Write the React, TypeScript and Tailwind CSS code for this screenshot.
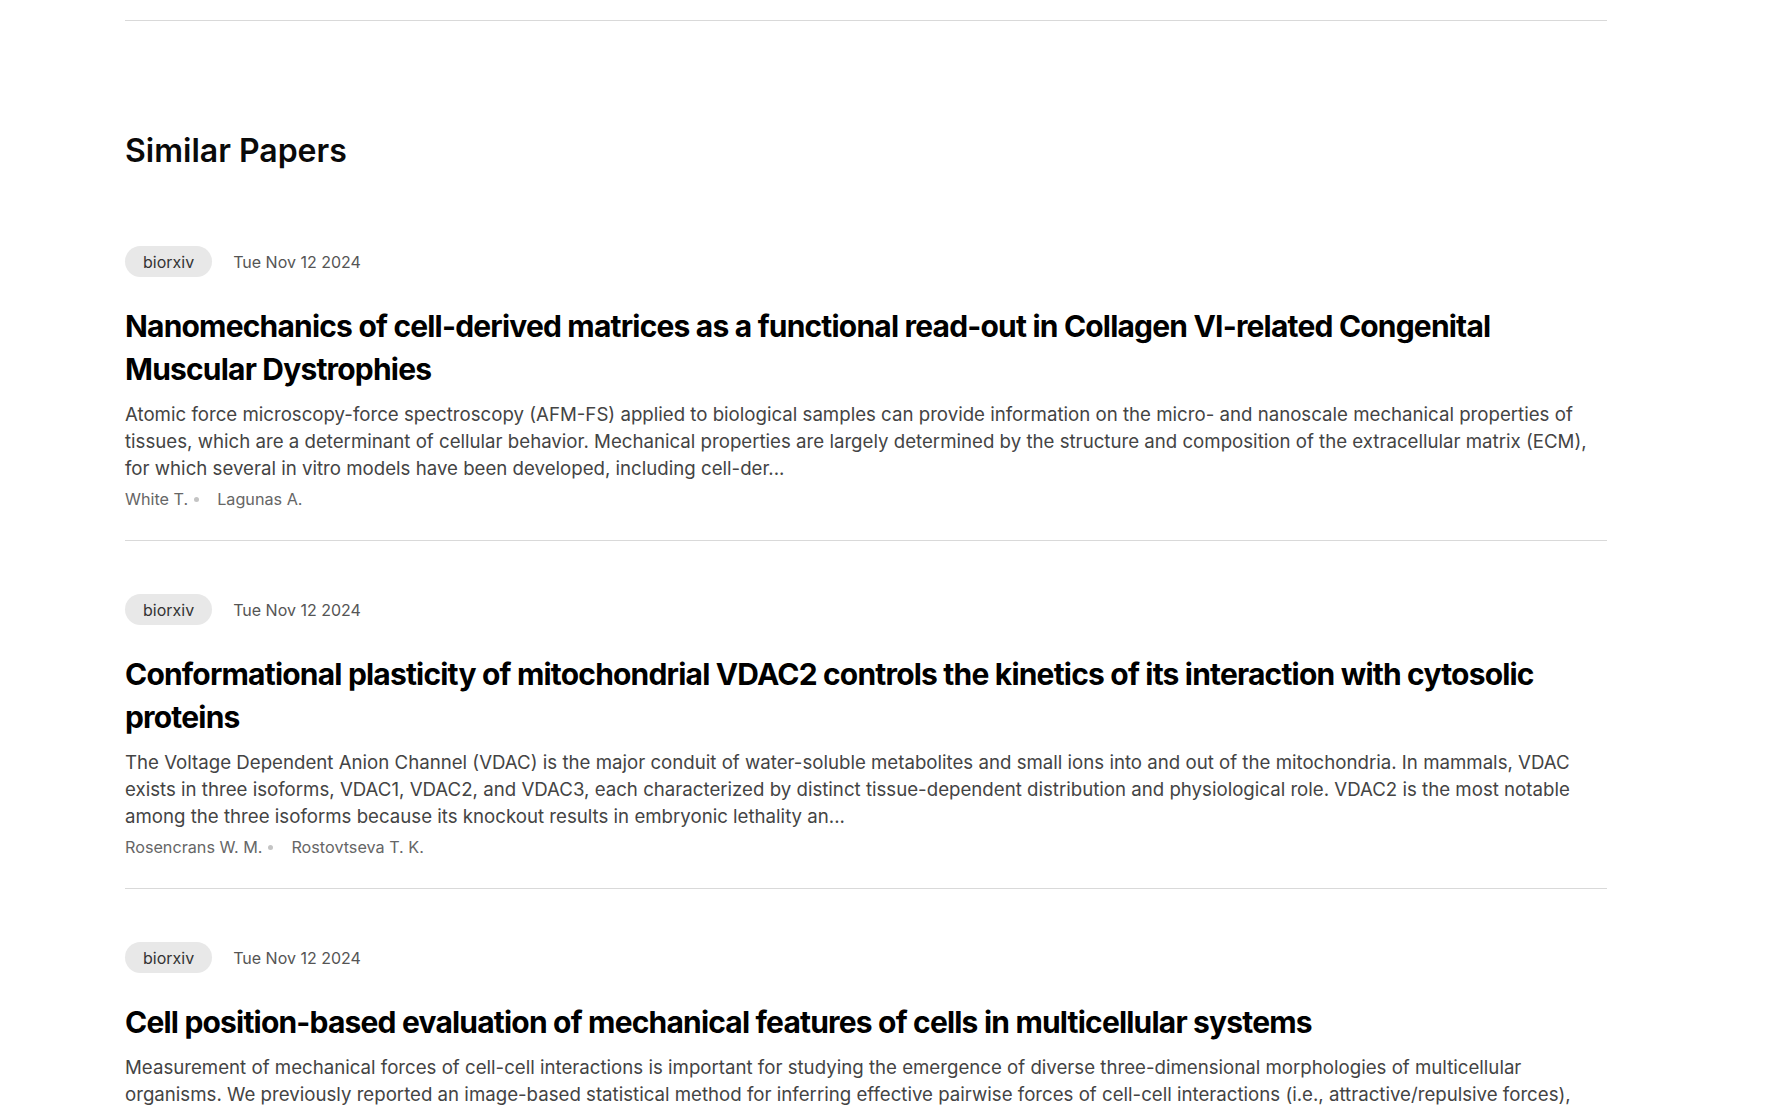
import React from "react";

type Paper = {
  source: string;
  date: string;
  title: string;
  abstract: string;
  authors: string[];
};

const papers: Paper[] = [
  {
    source: "biorxiv",
    date: "Tue Nov 12 2024",
    title:
      "Nanomechanics of cell-derived matrices as a functional read-out in Collagen VI-related Congenital Muscular Dystrophies",
    abstract:
      "Atomic force microscopy-force spectroscopy (AFM-FS) applied to biological samples can provide information on the micro- and nanoscale mechanical properties of tissues, which are a determinant of cellular behavior. Mechanical properties are largely determined by the structure and composition of the extracellular matrix (ECM), for which several in vitro models have been developed, including cell-der...",
    authors: ["White T.", "Lagunas A."],
  },
  {
    source: "biorxiv",
    date: "Tue Nov 12 2024",
    title:
      "Conformational plasticity of mitochondrial VDAC2 controls the kinetics of its interaction with cytosolic proteins",
    abstract:
      "The Voltage Dependent Anion Channel (VDAC) is the major conduit of water-soluble metabolites and small ions into and out of the mitochondria. In mammals, VDAC exists in three isoforms, VDAC1, VDAC2, and VDAC3, each characterized by distinct tissue-dependent distribution and physiological role. VDAC2 is the most notable among the three isoforms because its knockout results in embryonic lethality an...",
    authors: ["Rosencrans W. M.", "Rostovtseva T. K."],
  },
  {
    source: "biorxiv",
    date: "Tue Nov 12 2024",
    title:
      "Cell position-based evaluation of mechanical features of cells in multicellular systems",
    abstract:
      "Measurement of mechanical forces of cell-cell interactions is important for studying the emergence of diverse three-dimensional morphologies of multicellular organisms. We previously reported an image-based statistical method for inferring effective pairwise forces of cell-cell interactions (i.e., attractive/repulsive forces), which was applied to various tissues and cell aggregates...",
    authors: ["Koyama H.", "Fujimori T."],
  },
];

function PaperItem({ p }: { p: Paper }) {
  return (
    <div className="border-b border-[#d9d9d9] pb-[30px] mb-[53px]">
      <div className="flex items-center gap-[21px]">
        <span className="h-[31px] flex items-center rounded-full bg-[#e8e8e8] px-[18px] text-[16px] text-[#333]">
          {p.source}
        </span>
        <span className="text-[16px] text-[#555]">{p.date}</span>
      </div>
      <h3 className="mt-[28px] text-[30px] leading-[43px] font-bold tracking-[-0.027em] text-black">
        {p.title}
      </h3>
      <p className="mt-[10px] text-[18.67px] leading-[27px] text-[#444]">
        {p.abstract}
      </p>
      <div className="mt-[6px] flex items-center text-[16.2px] leading-[22px] text-[#666]">
        {p.authors.map((a, i) => (
          <React.Fragment key={i}>
            <span>{a}</span>
            {i < p.authors.length - 1 && (
              <span className="ml-[6px] mr-[18px] inline-block h-[5px] w-[5px] rounded-full bg-[#c4c4c4]" />
            )}
          </React.Fragment>
        ))}
      </div>
    </div>
  );
}

export default function App() {
  return (
    <div
      className="min-h-screen bg-white"
      style={{ fontFamily: "Inter, 'Noto Sans', sans-serif" }}
    >
      <div className="ml-[125px] w-[1482px]">
        <div className="h-[21px] border-b border-[#d9d9d9]" />
        <h2 className="mt-[110px] text-[32px] leading-[40px] font-semibold text-[#0a0a0a]">
          Similar Papers
        </h2>
        <div className="mt-[75px]">
          {papers.map((p, i) => (
            <PaperItem key={i} p={p} />
          ))}
        </div>
      </div>
    </div>
  );
}
